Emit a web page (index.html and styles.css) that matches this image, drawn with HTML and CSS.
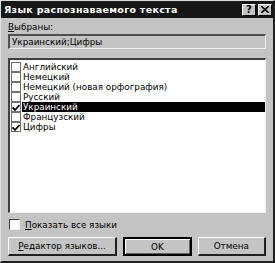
FILE: index.html
```html
<!DOCTYPE html>
<html>
<head>
    <meta charset="UTF-8">
    <title>Язык распознаваемого текста</title>
    <link rel="stylesheet" href="styles.css">
</head>
<body>
    <div class="dialog">
        <div class="titlebar">
            <span class="title">Язык распознаваемого текста</span>
            <div class="title-buttons">
                <span class="tb-button help">?</span>
                <span class="tb-button close">
                    <svg width="8" height="7" viewBox="0 0 8 7"><path d="M0 0 L8 7 M8 0 L0 7" stroke="#000" stroke-width="1.6"/></svg>
                </span>
            </div>
        </div>

        <div class="content">
            <div class="label"><u>В</u>ыбраны:</div>
            <div class="field">Украинский;Цифры</div>

            <div class="listbox">
                <div class="item"><span class="check"></span><span class="text">Английский</span></div>
                <div class="item"><span class="check"></span><span class="text">Немецкий</span></div>
                <div class="item"><span class="check"></span><span class="text">Немецкий (новая орфография)</span></div>
                <div class="item"><span class="check"></span><span class="text">Русский</span></div>
                <div class="item selected"><span class="check checked"><svg width="8" height="7" viewBox="0 0 8 7"><path d="M0.5 3.5 L3 6 L7.5 1" stroke="#000" stroke-width="1.8" fill="none"/></svg></span><span class="text">Украинский</span></div>
                <div class="item"><span class="check"></span><span class="text">Французский</span></div>
                <div class="item"><span class="check checked"><svg width="8" height="7" viewBox="0 0 8 7"><path d="M0.5 3.5 L3 6 L7.5 1" stroke="#000" stroke-width="1.8" fill="none"/></svg></span><span class="text">Цифры</span></div>
            </div>

            <div class="show-all">
                <span class="check big"></span>
                <span><u>П</u>оказать все языки</span>
            </div>

            <div class="buttons">
                <button class="btn wide"><u>Р</u>едактор языков...</button>
                <button class="btn default">OK</button>
                <button class="btn">Отмена</button>
            </div>
        </div>
    </div>
</body>
</html>
```

FILE: styles.css
```css
body {
    margin: 0;
    padding: 0;
    font-family: 'DejaVu Sans', 'Liberation Sans', sans-serif;
    font-size: 8.8px;
    color: #000;
}

.dialog {
    width: 275px;
    height: 263px;
    box-sizing: border-box;
    background: #c4c4c4;
    border-top: 1px solid #e0e0e0;
    border-left: 1px solid #e0e0e0;
    border-right: 2px solid #202020;
    border-bottom: 2px solid #202020;
}

.titlebar {
    height: 17px;
    background: #161616;
    display: flex;
    align-items: center;
    justify-content: space-between;
    padding: 0 1px 0 3px;
}

.title {
    color: #fff;
    font-weight: bold;
    font-size: 9.5px;
    letter-spacing: 0.3px;
}

.title-buttons {
    display: flex;
    gap: 2px;
}

.tb-button {
    width: 12px;
    height: 10px;
    background: #c4c4c4;
    border-top: 1px solid #fff;
    border-left: 1px solid #fff;
    border-right: 1px solid #000;
    border-bottom: 1px solid #000;
    display: flex;
    align-items: center;
    justify-content: center;
    font-weight: bold;
    font-size: 10px;
    line-height: 10px;
}

.content {
    padding: 4px 7px 0 7px;
}

.label {
    height: 11px;
    line-height: 11px;
    margin-bottom: 1px;
}

.field {
    height: 12px;
    line-height: 12px;
    padding: 0 2px;
    background: #c4c4c4;
    border-top: 2px solid #505050;
    border-left: 2px solid #505050;
    border-right: 1px solid #f0f0f0;
    border-bottom: 1px solid #f0f0f0;
}

.listbox {
    margin-top: 9px;
    height: 150px;
    background: #fff;
    border-top: 2px solid #404040;
    border-left: 2px solid #404040;
    border-right: 1px solid #f0f0f0;
    border-bottom: 1px solid #f0f0f0;
    padding-top: 2px;
}

.item {
    display: flex;
    align-items: center;
    height: 10px;
}

.check {
    width: 8px;
    height: 8px;
    margin-left: 1px;
    border: 1px solid #707070;
    background: #fff;
    display: flex;
    align-items: center;
    justify-content: center;
    flex-shrink: 0;
}

.item .text {
    flex: 1;
    margin-left: 1px;
    height: 10px;
    line-height: 10px;
    padding-left: 1px;
}

.item.selected .text {
    background: #000;
    color: #fff;
}

.show-all {
    display: flex;
    align-items: center;
    gap: 5px;
    margin-top: 6px;
    height: 11px;
    padding-left: 1px;
}

.check.big {
    width: 9px;
    height: 9px;
    margin-left: 0;
    border-top: 1px solid #404040;
    border-left: 1px solid #404040;
    border-right: 1px solid #f0f0f0;
    border-bottom: 1px solid #f0f0f0;
}

.buttons {
    display: flex;
    gap: 6px;
    margin-top: 7px;
}

.btn {
    height: 19px;
    width: 69px;
    padding: 0;
    font-family: 'DejaVu Sans', 'Liberation Sans', sans-serif;
    font-size: 8.8px;
    color: #000;
    background: #c4c4c4;
    border-top: 1px solid #fff;
    border-left: 1px solid #fff;
    border-right: 2px solid #202020;
    border-bottom: 2px solid #202020;
}

.btn.wide {
    width: 110px;
}

.btn.default {
    border: 2px solid #000;
    box-shadow: inset 1px 1px 0 #fff, inset -1px -1px 0 #606060;
}
```
